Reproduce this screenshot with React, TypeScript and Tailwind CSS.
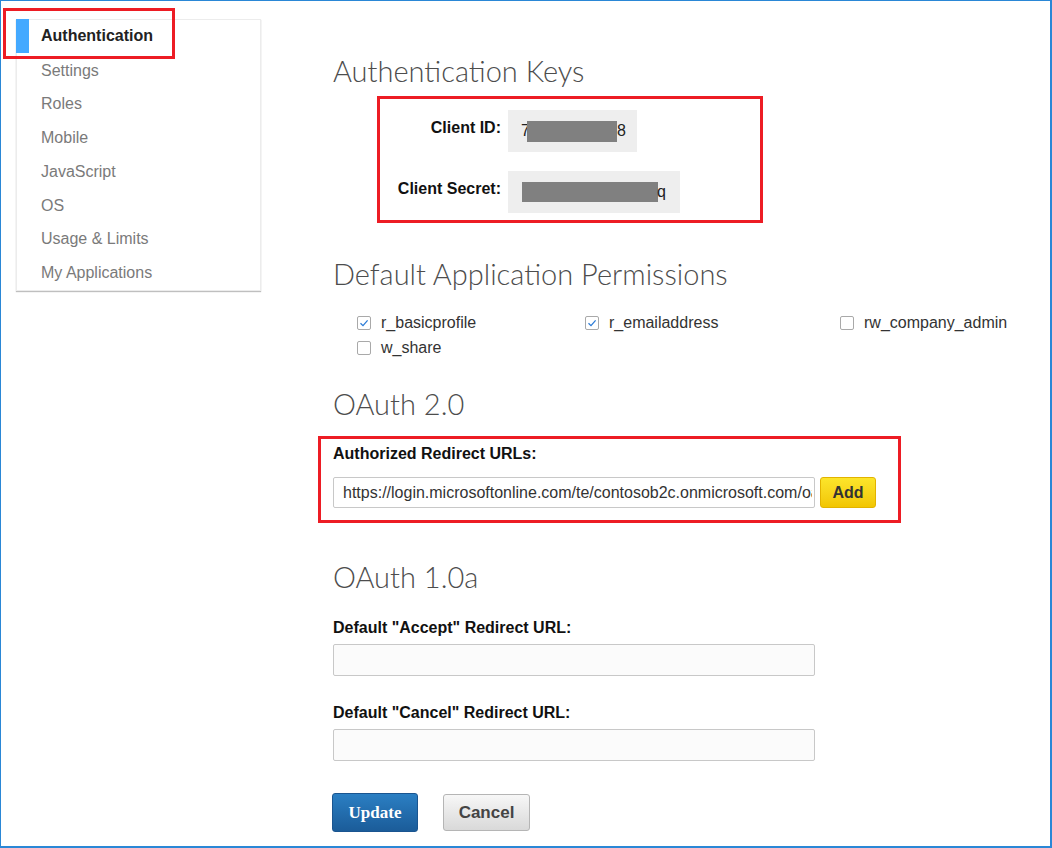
const navItems = [
  "Authentication",
  "Settings",
  "Roles",
  "Mobile",
  "JavaScript",
  "OS",
  "Usage & Limits",
  "My Applications",
];

const perms = [
  { name: "r_basicprofile", checked: true },
  { name: "r_emailaddress", checked: true },
  { name: "rw_company_admin", checked: false },
  { name: "w_share", checked: false },
];

const heading =
  "h-[34px] leading-[34px] text-[29px] font-light text-[#4d4d4d] font-['Lato',sans-serif]";
const label =
  "h-[18px] leading-[18px] text-[16px] font-bold text-[#111] font-['Liberation_Sans',Arial,sans-serif]";

const Checkbox = ({ checked }: { checked: boolean }) => (
  <span className="w-[14px] h-[14px] rounded-[2px] border border-[#a9a9a9] bg-white flex items-center justify-center">
    {checked && (
      <svg width="10" height="10" viewBox="0 0 10 10">
        <polyline
          points="1.5,5.2 4,7.6 8.6,2.4"
          fill="none"
          stroke="#2b7bd6"
          strokeWidth="1.3"
        />
      </svg>
    )}
  </span>
);

const App = () => {
  return (
    <div className="relative w-[1052px] h-[848px] bg-white border-t border-l border-r-2 border-b-2 border-[#2a87d6] flex font-['Liberation_Sans',Arial,sans-serif] overflow-hidden">
      {/* sidebar */}
      <div className="w-[332px] shrink-0 pl-[15px] pt-[18px]">
        <div className="w-[245px] border border-[#ececec] shadow-[0_1px_1px_rgba(0,0,0,0.25)] bg-white">
          {navItems.map((item, i) => (
            <div key={item} className="relative h-[33.75px] flex items-center pl-[24px]">
              {i === 0 && (
                <span className="absolute left-[-1px] top-[-1px] w-[13px] h-[34px] bg-[#44a9ff]" />
              )}
              <span
                className={
                  i === 0
                    ? "text-[16px] font-bold text-[#222] -mt-[2px]"
                    : "text-[16px] text-[#7a7a7a]"
                }
              >
                {item}
              </span>
            </div>
          ))}
        </div>
      </div>

      {/* main */}
      <div className="flex flex-col pt-[53px]">
        <div className={heading}>Authentication Keys</div>

        <div className="mt-[8px] ml-[44px] w-[386px] border-[3px] border-[#ed1c24] pt-[11px] pb-[7px] flex flex-col gap-[19px]">
          <div className="flex items-start">
            <div className={`w-[121px] text-right pt-[9px] ${label}`}>Client ID:</div>
            <div className="ml-[7px] w-[129px] h-[42px] bg-[#eeeeee] flex items-center pl-[13px] text-[16px] text-[#222]">
              <span>7</span>
              <span className="w-[90px] h-[21px] bg-[#808080] -ml-[3px]" />
              <span>8</span>
            </div>
          </div>
          <div className="flex items-start">
            <div className={`w-[121px] text-right pt-[9px] ${label}`}>Client Secret:</div>
            <div className="ml-[7px] w-[172px] h-[42px] bg-[#eeeeee] flex items-center pl-[14px] text-[16px] text-[#222]">
              <span className="w-[136px] h-[20px] bg-[#808080]" />
              <span className="-ml-[1px]">q</span>
            </div>
          </div>
        </div>

        <div className={`mt-[34px] ${heading}`}>Default Application Permissions</div>

        <div className="mt-[19px] ml-[24px] grid grid-cols-[228px_255px_auto]">
          {perms.map((p) => (
            <div key={p.name} className="h-[25px] flex items-center gap-[10px] text-[16px] text-[#333]">
              <Checkbox checked={p.checked} />
              <span>{p.name}</span>
            </div>
          ))}
        </div>

        <div className={`mt-[27px] ${heading}`}>OAuth 2.0</div>

        <div className="mt-[15px] -ml-[15px] w-[583px] h-[87px] border-[3px] border-[#ed1c24] pl-[12px] pt-[6px]">
          <div className={label}>Authorized Redirect URLs:</div>
          <div className="mt-[14px] flex items-center gap-[5px]">
            <input
              readOnly
              value="https://login.microsoftonline.com/te/contosob2c.onmicrosoft.com/oauth2/authresp"
              className="w-[482px] h-[31px] border border-[#c8c8c8] rounded-[2px] bg-white pl-[9px] pr-[2px] text-[16px] text-[#333] outline-none"
            />
            <button className="w-[56px] h-[31px] rounded-[3px] border border-[#e2b300] bg-gradient-to-b from-[#fce52a] to-[#f2c600] text-[16px] font-bold text-[#333]">
              Add
            </button>
          </div>
        </div>

        <div className={`mt-[37px] ${heading}`}>OAuth 1.0a</div>

        <div className={`mt-[25px] ${label}`}>Default "Accept" Redirect URL:</div>
        <div className="mt-[7px] w-[482px] h-[32px] border border-[#c8c8c8] rounded-[2px] bg-[#fbfbfb]" />

        <div className={`mt-[28px] ${label}`}>Default "Cancel" Redirect URL:</div>
        <div className="mt-[7px] w-[482px] h-[32px] border border-[#c8c8c8] rounded-[2px] bg-[#fbfbfb]" />

        <div className="mt-[32px] flex items-center gap-[25px] -ml-[1px]">
          <button className="w-[86px] h-[39px] rounded-[3px] border border-[#1a5590] bg-gradient-to-b from-[#2b7fc3] to-[#1b5c99] text-white text-[17px] font-bold font-['Liberation_Serif',serif]">
            Update
          </button>
          <button className="w-[87px] h-[37px] rounded-[3px] border border-[#b5b5b5] bg-gradient-to-b from-[#f7f7f7] to-[#d9d9d9] text-[#444] text-[17px] font-bold">
            Cancel
          </button>
        </div>
      </div>

      {/* annotation highlight */}
      <div className="absolute left-[2px] top-[7px] w-[172px] h-[51px] border-[3px] border-[#ed1c24] pointer-events-none" />
    </div>
  );
};

export default App;
